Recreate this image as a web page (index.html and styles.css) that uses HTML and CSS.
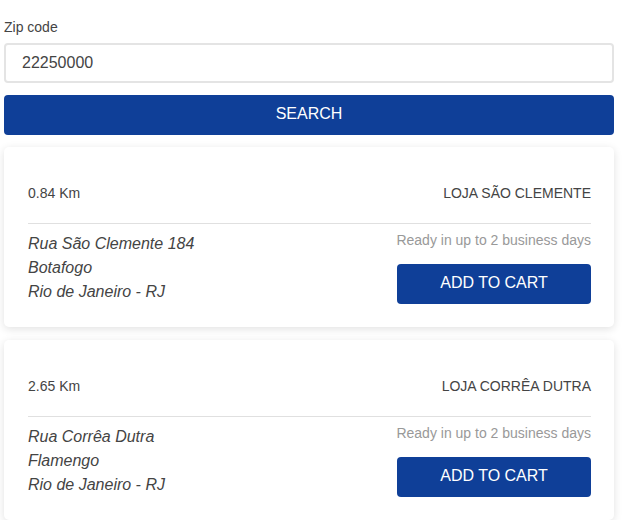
FILE: index.html
```html
<!DOCTYPE html>
<html>
<head>
<meta charset="utf-8">
<link rel="stylesheet" href="styles.css">
</head>
<body>
<div class="page">
  <label class="label" for="zip">Zip code</label>
  <input class="input" id="zip" type="text" value="22250000">
  <button class="search">SEARCH</button>

  <div class="card">
    <div class="card-head">
      <span class="dist">0.84 Km</span>
      <span class="store">LOJA SÃO CLEMENTE</span>
    </div>
    <div class="card-body">
      <div class="addr">
        <div>Rua São Clemente 184</div>
        <div>Botafogo</div>
        <div>Rio de Janeiro - RJ</div>
      </div>
      <div class="actions">
        <div class="ready">Ready in up to 2 business days</div>
        <button class="cart">ADD TO CART</button>
      </div>
    </div>
  </div>

  <div class="card">
    <div class="card-head">
      <span class="dist">2.65 Km</span>
      <span class="store">LOJA CORRÊA DUTRA</span>
    </div>
    <div class="card-body">
      <div class="addr">
        <div>Rua Corrêa Dutra</div>
        <div>Flamengo</div>
        <div>Rio de Janeiro - RJ</div>
      </div>
      <div class="actions">
        <div class="ready">Ready in up to 2 business days</div>
        <button class="cart">ADD TO CART</button>
      </div>
    </div>
  </div>
</div>
</body>
</html>
```
FILE: styles.css
```css
html, body {
  margin: 0;
  padding: 0;
  background: #fff;
}
body {
  font-family: "Liberation Sans", Arial, sans-serif;
  color: #444;
}
.page {
  width: 610px;
  padding: 17px 0 0 4px;
  display: flex;
  flex-direction: column;
}
.label {
  font-size: 14px;
  line-height: 20px;
  color: #444;
  margin-bottom: 6px;
}
.input {
  box-sizing: border-box;
  height: 40px;
  width: 100%;
  border: 2px solid #e4e4e4;
  border-radius: 4px;
  padding: 0 16px;
  font-family: inherit;
  font-size: 16px;
  color: #444;
  outline: none;
  margin: 0;
}
.search {
  margin-top: 12px;
  height: 40px;
  width: 100%;
  border: none;
  border-radius: 4px;
  background: #0f3f98;
  color: #fff;
  font-family: inherit;
  font-size: 16px;
  padding: 0 0 3px;
  cursor: pointer;
}
.card {
  margin-top: 12px;
  background: #fff;
  border-radius: 5px;
  box-shadow: 0 2px 8px rgba(0,0,0,0.12);
  padding: 36px 23px 24px 24px;
  height: 180px;
  box-sizing: border-box;
}
.card + .card {
  margin-top: 13px;
}
.card-head {
  display: flex;
  justify-content: space-between;
  align-items: center;
  font-size: 14px;
  line-height: 20px;
  color: #444;
  padding-bottom: 20px;
  border-bottom: 1px solid #e0e0e0;
}
.card-body {
  display: flex;
  justify-content: space-between;
  padding-top: 8px;
}
.addr {
  font-style: italic;
  font-size: 16px;
  line-height: 24px;
  color: #444;
}
.actions {
  display: flex;
  flex-direction: column;
  align-items: flex-end;
  margin-top: -2px;
}
.ready {
  font-size: 14px;
  line-height: 20px;
  color: #999;
}
.cart {
  margin-top: 14px;
  width: 194px;
  height: 40px;
  border: none;
  border-radius: 4px;
  background: #0f3f98;
  color: #fff;
  font-family: inherit;
  font-size: 16px;
  padding: 0 0 3px;
  cursor: pointer;
}
```
